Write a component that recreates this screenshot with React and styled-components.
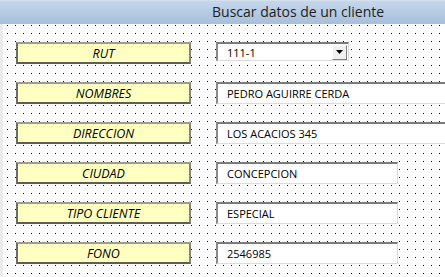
import React from 'react';
import styled, { createGlobalStyle } from 'styled-components';

const GlobalStyle = createGlobalStyle`
  html, body {
    margin: 0;
    padding: 0;
    overflow: hidden;
    background: #ffffff;
  }
`;

const Window = styled.div`
  width: 445px;
  height: 277px;
  display: flex;
  flex-direction: column;
  overflow: hidden;
`;

const TitleBar = styled.div`
  height: 24px;
  flex-shrink: 0;
  box-sizing: border-box;
  padding-left: 212px;
  border-top: 1px solid #d4e0ee;
  background: linear-gradient(to bottom, #c6d7eb, #a6bfdc);
  font-family: 'Open Sans', 'Noto Sans', sans-serif;
  font-size: 14px;
  line-height: 22px;
  color: #1e1e1e;
  white-space: nowrap;
`;

const Canvas = styled.div`
  flex: 1;
  box-sizing: border-box;
  border-left: 3px solid #ebebeb;
  padding: 18px 0 0 13px;
  display: flex;
  flex-direction: column;
  gap: 18px;
  background-color: #ffffff;
  background-image:
    linear-gradient(to bottom, transparent 1px, #ffffff 1px),
    linear-gradient(to right, #000000 1px, #ffffff 1px);
  background-size: 8px 8px, 8px 8px;
  background-position: 4px 1px, 4px 1px;
`;

const Row = styled.div`
  display: flex;
  align-items: flex-start;
  gap: 25px;
  height: 22px;
`;

const Label = styled.div`
  width: 175px;
  height: 22px;
  flex-shrink: 0;
  box-sizing: border-box;
  background: #ffffc2;
  border-top: 2px solid #9c9c94;
  border-left: 2px solid #6e6e66;
  border-bottom: 2px solid #5e5e56;
  border-right: 2px solid #858580;
  display: flex;
  align-items: center;
  justify-content: center;
  font-family: 'Open Sans', 'Noto Sans', sans-serif;
  font-style: italic;
  font-size: 12.5px;
  color: #000000;
`;

const Field = styled.div`
  width: ${(p) => p.$width}px;
  height: ${(p) => p.$height || 22}px;
  flex-shrink: 0;
  box-sizing: border-box;
  background: #ffffff;
  border-top: 2px solid #7a7a7a;
  border-left: 2px solid #8a8a8a;
  border-right: 1px solid #dcdcdc;
  border-bottom: 1px solid #dcdcdc;
  display: flex;
  align-items: center;
  padding-left: 9px;
  font-family: 'Open Sans', 'Noto Sans', sans-serif;
  font-size: 11px;
  color: #000000;
  white-space: nowrap;
`;

const ComboText = styled.span`
  flex: 1;
`;

const ArrowButton = styled.div`
  width: 15px;
  height: 15px;
  margin-right: 1px;
  box-sizing: border-box;
  background: #f0f0f0;
  border-top: 1px solid #ffffff;
  border-left: 1px solid #ffffff;
  border-right: 1px solid #808080;
  border-bottom: 1px solid #808080;
  display: flex;
  align-items: center;
  justify-content: center;
`;

const Arrow = () => (
  <svg width="7" height="4" viewBox="0 0 7 4">
    <path d="M0 0h7L3.5 4z" fill="#000" />
  </svg>
);

const rows = [
  { label: 'RUT', value: '111-1', width: 133, combo: true },
  { label: 'NOMBRES', value: 'PEDRO AGUIRRE CERDA', width: 250 },
  { label: 'DIRECCION', value: 'LOS ACACIOS 345', width: 250 },
  { label: 'CIUDAD', value: 'CONCEPCION', width: 182 },
  { label: 'TIPO CLIENTE', value: 'ESPECIAL', width: 182 },
  { label: 'FONO', value: '2546985', width: 182 },
];

export default function App() {
  return (
    <>
      <GlobalStyle />
      <Window>
        <TitleBar>Buscar datos de un cliente</TitleBar>
        <Canvas>
          {rows.map((r) => (
            <Row key={r.label}>
              <Label>{r.label}</Label>
              {r.combo ? (
                <Field $width={r.width} $height={19}>
                  <ComboText>{r.value}</ComboText>
                  <ArrowButton>
                    <Arrow />
                  </ArrowButton>
                </Field>
              ) : (
                <Field $width={r.width}>{r.value}</Field>
              )}
            </Row>
          ))}
        </Canvas>
      </Window>
    </>
  );
}
